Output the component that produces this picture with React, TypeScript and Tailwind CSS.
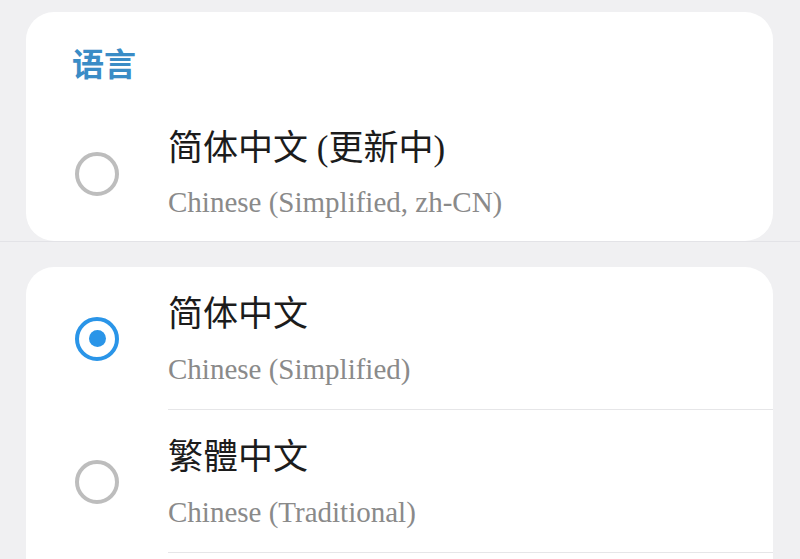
const languages = [
  { id: "zh-cn", name: "简体中文", desc: "Chinese (Simplified)" },
  { id: "zh-tw", name: "繁體中文", desc: "Chinese (Traditional)" },
];

function Radio({ checked }: { checked: boolean }) {
  return (
    <div
      className={
        checked
          ? "w-[44px] h-[44px] rounded-full border-[4.5px] border-[#2a95e8] flex items-center justify-center shrink-0"
          : "w-[44px] h-[44px] rounded-full border-[4px] border-[#bdbdbd] shrink-0"
      }
    >
      {checked && <div className="w-[17px] h-[17px] rounded-full bg-[#2a95e8]" />}
    </div>
  );
}

export default function App() {
  const font = "font-['Liberation_Serif','Noto_Sans_CJK_SC',serif]";
  return (
    <div className={`w-[800px] h-[559px] overflow-hidden bg-[#f0f0f2] ${font}`}>
      {/* Update section */}
      <div className="pt-[12px] border-b border-[#e3e3e7]">
        <div className="ml-[26px] mr-[27px] bg-white rounded-[28px] pt-[33px] pb-[19px]">
          <div className="pl-[46px] text-[32px] leading-[40px] font-bold text-[#3a8cc6]">语言</div>
          <div className="flex items-center mt-[40px]">
            <div className="w-[142px] pl-[49px]">
              <Radio checked={false} />
            </div>
            <div>
              <div className="text-[35px] leading-[48px] text-[#1c1c1c]">简体中文 (更新中)</div>
              <div className="mt-[9px] text-[29px] leading-[40px] text-[#8a8a8a]">
                Chinese (Simplified, zh-CN)
              </div>
            </div>
          </div>
        </div>
      </div>

      {/* Language list */}
      <div className="mt-[25px] ml-[26px] mr-[27px] bg-white rounded-t-[28px] h-[400px]">
        {languages.map((lang, i) => (
          <div key={lang.id} className="flex items-center">
            <div className="w-[142px] pl-[49px]">
              <Radio checked={i === 0} />
            </div>
            <div className="flex-1 pt-[24px] pb-[20px] border-b border-[#e6e6e8]">
              <div className="text-[35px] leading-[48px] text-[#1c1c1c]">{lang.name}</div>
              <div className="mt-[10px] text-[29px] leading-[40px] text-[#8a8a8a]">{lang.desc}</div>
            </div>
          </div>
        ))}
      </div>
    </div>
  );
}
